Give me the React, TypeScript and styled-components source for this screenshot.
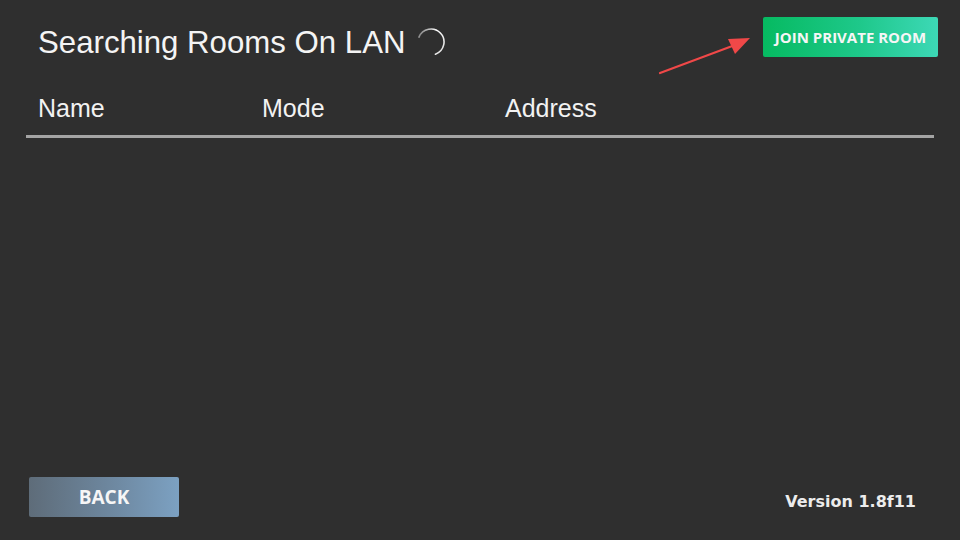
import * as React from "react";
import styled, { createGlobalStyle } from "styled-components";

const GlobalStyle = createGlobalStyle`
  html, body {
    margin: 0;
    padding: 0;
    background: #2f2f2f;
  }
`;

const Screen = styled.div`
  position: relative;
  width: 960px;
  height: 540px;
  display: flex;
  flex-direction: column;
  background: #2f2f2f;
  overflow: hidden;
  font-family: "Liberation Sans", Arial, sans-serif;
`;

const TopBar = styled.div`
  display: flex;
  justify-content: space-between;
  align-items: flex-start;
  padding: 17px 22px 0 38px;
`;

const TitleGroup = styled.div`
  display: flex;
  align-items: center;
  gap: 10px;
  height: 52px;
`;

const Title = styled.h1`
  margin: 0;
  font-size: 31.2px;
  font-weight: 400;
  line-height: 52px;
  color: #f4f4f4;
`;

const SpinnerSvg = styled.svg`
  margin-top: -2px;
`;

const ActionButton = styled.button<{ $variant: "join" | "back" }>`
  border: none;
  border-radius: 2px;
  height: 40px;
  padding: 0;
  cursor: pointer;
  font-family: "Open Sans", "Noto Sans", sans-serif;
  font-weight: 700;
  color: #f6f6f6;
  width: ${({ $variant }) => ($variant === "join" ? "175px" : "150px")};
  font-size: ${({ $variant }) => ($variant === "join" ? "15px" : "19px")};
  background: ${({ $variant }) =>
    $variant === "join"
      ? "linear-gradient(90deg, #06ba61 0%, #1ec88a 55%, #3dd8b6 100%)"
      : "linear-gradient(90deg, #5e6c79 0%, #6f8aa3 60%, #7ca1c2 100%)"};
`;

const Table = styled.div`
  margin: 24px 26px 0;
`;

const HeaderRow = styled.div`
  display: grid;
  grid-template-columns: 224px 243px 1fr;
  padding: 0 0 12px 12px;
  border-bottom: 3px solid #a4a4a4;
`;

const HeaderCell = styled.div`
  font-size: 25px;
  line-height: 30px;
  color: #f2f2f2;
`;

const Spacer = styled.div`
  flex: 1;
`;

const Footer = styled.div`
  display: flex;
  justify-content: space-between;
  align-items: center;
  padding: 0 44px 23px 29px;
`;

const Version = styled.div`
  padding-top: 9px;
  font-family: "DejaVu Sans", Verdana, sans-serif;
  font-weight: 700;
  font-size: 16px;
  color: #ececec;
`;

const ArrowOverlay = styled.svg`
  position: absolute;
  left: 655px;
  top: 30px;
`;

function Spinner() {
  return (
    <SpinnerSvg width="30" height="30" viewBox="0 0 30 30">
      <defs>
        <linearGradient id="spin" x1="0" y1="0.3" x2="1" y2="0.8">
          <stop offset="0%" stopColor="#ffffff" stopOpacity="0.45" />
          <stop offset="45%" stopColor="#ffffff" stopOpacity="1" />
          <stop offset="100%" stopColor="#ffffff" stopOpacity="0.85" />
        </linearGradient>
      </defs>
      <path
        d="M2.95 10.13 A13 13 0 1 1 19.45 27.2"
        fill="none"
        stroke="url(#spin)"
        strokeWidth="1.6"
        strokeLinecap="round"
      />
    </SpinnerSvg>
  );
}

export default function App() {
  return (
    <>
      <GlobalStyle />
      <Screen>
        <TopBar>
          <TitleGroup>
            <Title>Searching Rooms On LAN</Title>
            <Spinner />
          </TitleGroup>
          <ActionButton $variant="join">JOIN PRIVATE ROOM</ActionButton>
        </TopBar>
        <Table>
          <HeaderRow>
            <HeaderCell>Name</HeaderCell>
            <HeaderCell>Mode</HeaderCell>
            <HeaderCell>Address</HeaderCell>
          </HeaderRow>
        </Table>
        <Spacer />
        <Footer>
          <ActionButton $variant="back">BACK</ActionButton>
          <Version>Version 1.8f11</Version>
        </Footer>
        <ArrowOverlay width="105" height="50" viewBox="0 0 105 50">
          <line x1="5" y1="43" x2="80" y2="15" stroke="#f04848" strokeWidth="2.2" strokeLinecap="round" />
          <polygon points="95,8 73,9 80,24" fill="#f04848" />
        </ArrowOverlay>
      </Screen>
    </>
  );
}
